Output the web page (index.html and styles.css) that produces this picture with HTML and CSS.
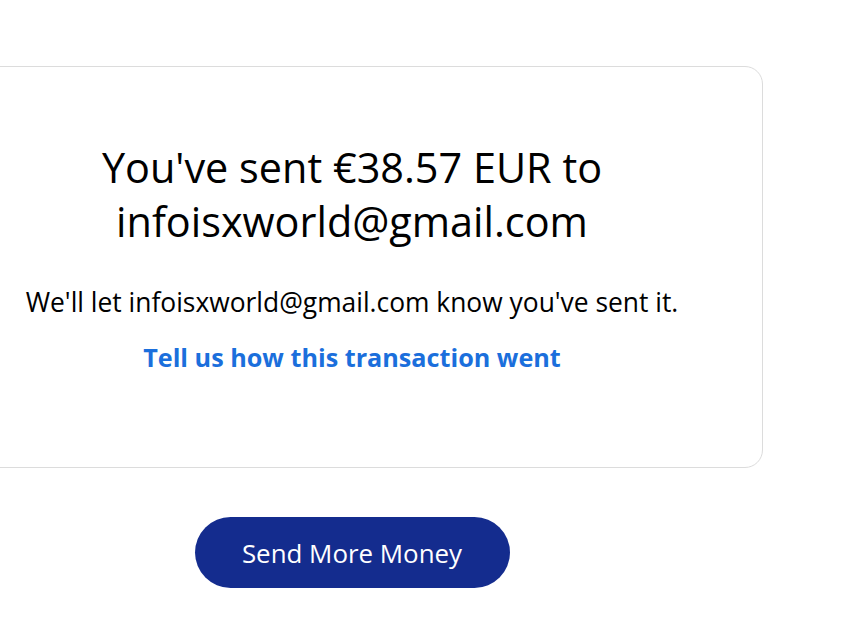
FILE: index.html
```html
<!DOCTYPE html>
<html>
<head>
<meta charset="utf-8">
<link rel="stylesheet" href="styles.css">
</head>
<body>
<main class="page">
  <section class="card">
    <h1 class="headline">You've sent €38.57 EUR to<br>infoisxworld@gmail.com</h1>
    <p class="note">We'll let infoisxworld@gmail.com know you've sent it.</p>
    <a class="feedback" href="#">Tell us how this transaction went</a>
  </section>
  <div class="actions">
    <button class="primary">Send More Money</button>
  </div>
</main>
</body>
</html>
```

FILE: styles.css
```css
html, body {
  margin: 0;
  padding: 0;
  background: #ffffff;
  overflow: hidden;
}
body {
  font-family: "Open Sans", Lato, sans-serif;
  color: #000000;
}
.page {
  width: 822px;
  margin-left: -59px;
  padding-top: 66px;
  display: flex;
  flex-direction: column;
  align-items: center;
}
.card {
  box-sizing: border-box;
  width: 822px;
  height: 402px;
  border: 1px solid #dcdcdc;
  border-radius: 18px;
  display: flex;
  flex-direction: column;
  align-items: center;
  padding-top: 73px;
  text-align: center;
}
.headline {
  margin: 0;
  font-weight: 400;
  font-size: 41.4px;
  line-height: 54px;
  color: #000000;
}
.note {
  margin: 37px 0 0;
  font-size: 26.4px;
  line-height: 34px;
  color: #000000;
}
.feedback {
  margin-top: 21px;
  font-size: 25.2px;
  line-height: 34px;
  font-weight: 700;
  color: #1b6fdc;
  text-decoration: none;
}
.actions {
  margin-top: 49px;
  display: flex;
  justify-content: center;
}
.primary {
  width: 315px;
  height: 71px;
  border: none;
  border-radius: 36px;
  background: #142c8e;
  color: #ffffff;
  font-family: "Open Sans", Lato, sans-serif;
  font-size: 25.9px;
  font-weight: 500;
  padding: 0;
}
```
